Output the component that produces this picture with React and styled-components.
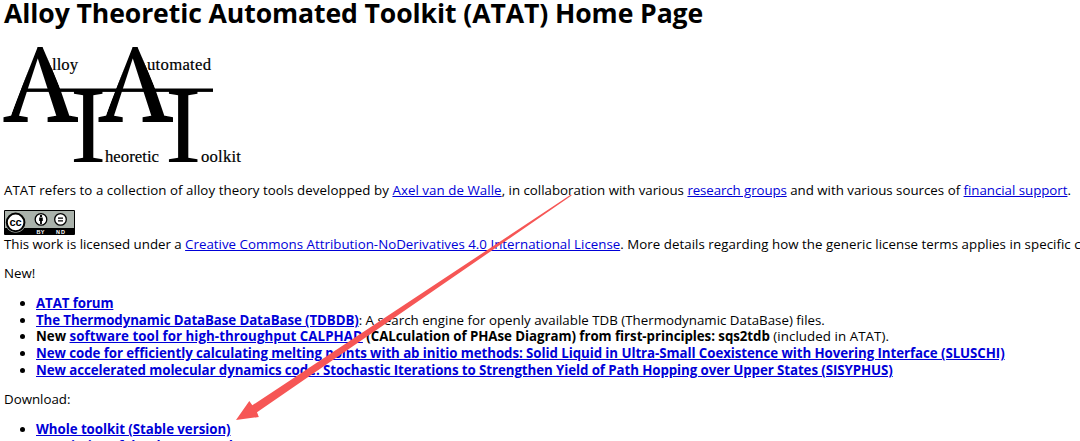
import styled, { createGlobalStyle } from "styled-components";

const App = () => {
  return (
    <>
      <GlobalStyle />
      <Page>
        <Title>
          <Run $track={-0.1}>Alloy Theoretic Automated Toolkit (ATAT) Home Page</Run>
        </Title>
        <Logo />
        <Para $top={17}>
          <Run $track={0.05}>ATAT refers to a collection of alloy theory tools developped by </Run>
          <Link $track={0.06} href="#">Axel van de Walle</Link>
          <Run>, in collaboration with various </Run>
          <Link $track={-0.1} href="#">research groups</Link>
          <Run> and with various sources of </Run>
          <Link $track={-0.03} href="#">financial support</Link>.
        </Para>
        <Badge />
        <Para>
          <Run $track={-0.02}>This work is licensed under a </Run>
          <Link $track={0.01} href="#">Creative Commons Attribution-NoDerivatives 4.0 International License</Link>
          <Run $track={0.04}>. More details regarding how the generic license terms applies in specific c</Run>
        </Para>
        <Para $top={13}>New!</Para>
        <List>
          <Item>
            <Link $bold $track={-0.1} href="#">ATAT forum</Link>
          </Item>
          <Item>
            <Link $bold $track={-0.1} href="#">The Thermodynamic DataBase DataBase (TDBDB)</Link>
            <Run $track={0.01}>: A search engine for openly available TDB (Thermodynamic DataBase) files.</Run>
          </Item>
          <Item>
            <Run $bold>New </Run>
            <Link $bold $track={0.05} href="#">software tool for high-throughput CALPHAD</Link>
            <Run $bold $track={-0.05}> (CALculation of PHAse Diagram) from first-principles: sqs2tdb</Run>
            <Run $track={0.07}> (included in ATAT).</Run>
          </Item>
          <Item>
            <Link $bold $track={-0.068} href="#">
              New code for efficiently calculating melting points with ab initio methods: Solid Liquid in Ultra-Small Coexistence with Hovering Interface (SLUSCHI)
            </Link>
          </Item>
          <Item>
            <Link $bold $track={-0.08} href="#">
              New accelerated molecular dynamics code: Stochastic Iterations to Strengthen Yield of Path Hopping over Upper States (SISYPHUS)
            </Link>
          </Item>
        </List>
        <Para $top={12.6}>Download:</Para>
        <List>
          <Item>
            <Link $bold $track={-0.05} href="#">Whole toolkit (Stable version)</Link>
          </Item>
          <Item $top={0.6}>
            <Link $bold $track={-0.45} href="#">Description of the changes made</Link>
          </Item>
        </List>
        <Arrow />
      </Page>
    </>
  );
};

const Logo = () => (
  <LogoSvg width="240" height="120" viewBox="4 45 240 120">
    <defs>
      {/* sharpens the apex of the big letters */}
      <clipPath id="apex">
        <path d="M37.7 47H42.5L71.5 115H78V122H3V115H11Z" />
      </clipPath>
    </defs>
    <g fontFamily="Liberation Serif, serif" fill="#000">
      <g fontSize="112" stroke="#000" strokeWidth="2.2">
        <g clipPath="url(#apex)">
          <text transform="translate(3.5 121) scale(.92 1)">Λ</text>
        </g>
        <g transform="translate(95 0)">
          <g clipPath="url(#apex)">
            <text transform="translate(3.5 121) scale(.92 1)">Λ</text>
          </g>
        </g>
      </g>
      <g fontSize="109">
        <text x="70" y="162">I</text>
        <text x="165" y="162">I</text>
      </g>
      <rect x="26" y="88.5" width="187" height="3.4" />
      <g fontSize="16.7" stroke="#000" strokeWidth="0.2">
        <text x="52" y="70" textLength="26">lloy</text>
        <text x="147" y="70" textLength="64">utomated</text>
        <text x="105" y="162" textLength="54">heoretic</text>
        <text x="201" y="162" textLength="40">oolkit</text>
      </g>
    </g>
  </LogoSvg>
);

const Badge = () => (
  <BadgeSvg width="71" height="25" viewBox="0 0 71 25">
    <rect width="71" height="25" rx="1" fill="#000" />
    <rect x="1" y="1" width="69" height="17" fill="#aab2ab" />
    <circle cx="11.6" cy="12.4" r="10.4" fill="#aab2ab" />
    <circle cx="11.6" cy="12.4" r="8.8" fill="#fff" stroke="#000" strokeWidth="2" />
    <g fontFamily="Liberation Sans, sans-serif" fontWeight="700">
      <text x="5.6" y="15.6" fontSize="11" textLength="12">cc</text>
      <text x="32.5" y="23.8" fontSize="5.5" fill="#fff" textLength="8">BY</text>
      <text x="52" y="23.8" fontSize="5.5" fill="#fff" textLength="9">ND</text>
    </g>
    <circle cx="37" cy="9.4" r="5.8" fill="#fff" stroke="#000" strokeWidth="1.3" />
    <circle cx="37" cy="6" r="1.2" />
    <path d="M35.2 7.6h3.6v3.4h-.9v3h-1.8v-3h-.9z" />
    <circle cx="56.5" cy="9.4" r="5.8" fill="#fff" stroke="#000" strokeWidth="1.3" />
    <path d="M54 8.2h5M54 10.8h5" stroke="#000" strokeWidth="1.2" />
  </BadgeSvg>
);

const Arrow = () => (
  <ArrowSvg width="1080" height="441" viewBox="0 0 1080 441">
    <path d="M571 194.6L252.3 405.3L249.3 401L236 420L258.8 417L257 412.3L571.6 195.6Z" fill="#f65655" />
  </ArrowSvg>
);

const GlobalStyle = createGlobalStyle`
  body {
    margin: 0;
    background: #fff;
    overflow: hidden;
  }
`;
const Page = styled.main`
  position: relative;
  height: 441px;
  padding-left: 4px;
  overflow: hidden;
  box-sizing: border-box;
  color: #000;
  font-family: "Open Sans", sans-serif;
  font-size: 13.3px;
  line-height: 16.7px;
  white-space: nowrap;
`;
const Title = styled.h1`
  margin: 0;
  height: 45px;
  font-size: 26.6px;
  line-height: 27px;
`;
const LogoSvg = styled.svg`
  display: block;
  overflow: visible;
`;
const BadgeSvg = styled.svg`
  display: block;
  margin: 11.3px 0 0.6px;
`;
const ArrowSvg = styled.svg`
  position: absolute;
  top: 0;
  left: 0;
  pointer-events: none;
`;
const Para = styled.p`
  margin: ${(props) => props.$top || 0}px 0 0;
`;
const List = styled.ul`
  margin: 13px 0 0;
  padding-left: 32px;
`;
const Item = styled.li`
  padding-top: ${(props) => props.$top || 0}px;
`;
const Run = styled.span`
  font-weight: ${(props) => (props.$bold ? 700 : 400)};
  letter-spacing: ${(props) => props.$track || 0}px;

  h1 & {
    font-weight: 700;
  }
`;
const Link = styled.a`
  color: #0000d8;
  font-weight: ${(props) => (props.$bold ? 700 : 400)};
  letter-spacing: ${(props) => props.$track || 0}px;
  text-decoration: underline;
`;

export default App;
